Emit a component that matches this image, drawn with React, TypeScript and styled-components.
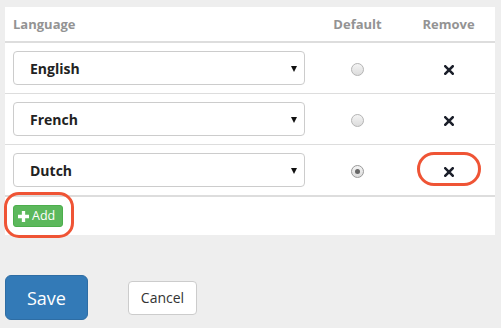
import React from "react";
import styled, { createGlobalStyle } from "styled-components";

const Global = createGlobalStyle`
  html, body { margin: 0; padding: 0; background: #eeeeee; }
  body { font-family: "Open Sans", "Noto Sans", sans-serif; font-size: 14px; color: #333; }
  * { box-sizing: border-box; }
`;

const Page = styled.div`
  padding: 7px 6px 0 5px;
  width: 501px;
`;

const Panel = styled.div`
  background: #fff;
  width: 490px;
`;

const Table = styled.table`
  width: 100%;
  border-collapse: collapse;
  border-spacing: 0;
  table-layout: fixed;
`;

const Th = styled.th<{ $align?: string; $w?: number }>`
  text-align: ${(p) => p.$align || "left"};
  ${(p) => (p.$w ? `width: ${p.$w}px;` : "")}
  padding: 8px;
  font-size: 13px;
  line-height: 18px;
  font-weight: 700;
  color: #939393;
  border-bottom: 2px solid #ddd;
`;

const Td = styled.td<{ $align?: string }>`
  text-align: ${(p) => p.$align || "left"};
  padding: 8px;
  border-top: 1px solid #ddd;
  vertical-align: middle;
  position: relative;
`;

const FootTd = styled.td`
  padding: 8px;
  border-top: 2px solid #ddd;
  height: 39px;
`;

const SelectBox = styled.div`
  height: 34px;
  border: 1px solid #ccc;
  border-radius: 4px;
  display: flex;
  align-items: center;
  justify-content: space-between;
  padding: 0 7px 0 16px;
  font-size: 14px;
  font-weight: 700;
  color: #222;
  background: #fff;
`;

const Caret = styled.span`
  width: 0;
  height: 0;
  border-left: 3px solid transparent;
  border-right: 3px solid transparent;
  border-top: 6px solid #111;
  margin-top: 1px;
`;

const Radio = styled.span<{ $checked?: boolean }>`
  display: inline-flex;
  align-items: center;
  justify-content: center;
  width: 13px;
  height: 13px;
  border-radius: 50%;
  border: 1px solid ${(p) => (p.$checked ? "#9a9a9a" : "#b5b5b5")};
  background: linear-gradient(#f4f4f4, #dcdcdc);
  vertical-align: middle;
  &::after {
    content: "";
    display: ${(p) => (p.$checked ? "block" : "none")};
    width: 5px;
    height: 5px;
    border-radius: 50%;
    background: #666;
  }
`;

const RemoveIcon = styled.svg`
  display: inline-block;
  vertical-align: middle;
`;

const Ring = styled.span<{ $l: number; $t: number; $w: number; $h: number; $r: number }>`
  position: absolute;
  left: ${(p) => p.$l}px;
  top: ${(p) => p.$t}px;
  width: ${(p) => p.$w}px;
  height: ${(p) => p.$h}px;
  border: 3.5px solid #ef5435;
  border-radius: ${(p) => p.$r}px;
  pointer-events: none;
`;

const AddWrap = styled.span`
  position: relative;
  display: inline-block;
`;

const AddButton = styled.button`
  display: inline-flex;
  align-items: center;
  gap: 3px;
  height: 22px;
  width: 50px;
  padding: 1px 4px;
  font-family: "Open Sans", "Noto Sans", sans-serif;
  font-size: 12.5px;
  line-height: 18px;
  color: #fff;
  background: #5cb85c;
  border: 1px solid #4cae4c;
  border-radius: 3px;
`;

const Actions = styled.div`
  display: flex;
  align-items: center;
  gap: 40px;
  margin-top: 40px;
`;

const SaveButton = styled.button`
  height: 45px;
  width: 83px;
  font-family: "Open Sans", "Noto Sans", sans-serif;
  font-size: 18px;
  color: #fff;
  background: #337ab7;
  border: 1px solid #2e6da4;
  border-radius: 6px;
  padding: 0;
`;

const CancelButton = styled.button`
  height: 34px;
  width: 69px;
  font-family: "Open Sans", "Noto Sans", sans-serif;
  font-size: 14px;
  color: #333;
  background: #fff;
  border: 1px solid #ccc;
  border-radius: 4px;
  padding: 0;
`;

const languages = [
  { name: "English", def: false },
  { name: "French", def: false },
  { name: "Dutch", def: true },
];

const XIcon = () => (
  <RemoveIcon width="10" height="10" viewBox="0 0 10 10">
    <path d="M1.3 1.3 L8.7 8.7 M8.7 1.3 L1.3 8.7" stroke="#1b1f2a" strokeWidth="2.6" strokeLinecap="square" />
  </RemoveIcon>
);

const PlusIcon = () => (
  <svg width="11" height="11" viewBox="0 0 10 10">
    <path d="M3.5 0 H6.5 V3.5 H10 V6.5 H6.5 V10 H3.5 V6.5 H0 V3.5 H3.5 Z" fill="#fff" />
  </svg>
);

export default function App() {
  return (
    <Page>
      <Global />
      <Panel>
        <Table>
          <thead>
            <tr>
              <Th>Language</Th>
              <Th $align="center" $w={89}>Default</Th>
              <Th $align="center" $w={93}>Remove</Th>
            </tr>
          </thead>
          <tbody>
            {languages.map((l, i) => (
              <tr key={l.name}>
                <Td>
                  <SelectBox>
                    {l.name}
                    <Caret />
                  </SelectBox>
                </Td>
                <Td $align="center">
                  <Radio $checked={l.def} />
                </Td>
                <Td $align="center">
                  <XIcon />
                  {i === 2 && <Ring $l={15} $t={7} $w={64} $h={34} $r={17} />}
                </Td>
              </tr>
            ))}
          </tbody>
          <tfoot>
            <tr>
              <FootTd colSpan={3}>
                <AddWrap>
                  <AddButton>
                    <PlusIcon />
                    Add
                  </AddButton>
                  <Ring $l={-9} $t={-13} $w={70} $h={46} $r={15} />
                </AddWrap>
              </FootTd>
            </tr>
          </tfoot>
        </Table>
      </Panel>
      <Actions>
        <SaveButton>Save</SaveButton>
        <CancelButton>Cancel</CancelButton>
      </Actions>
    </Page>
  );
}
